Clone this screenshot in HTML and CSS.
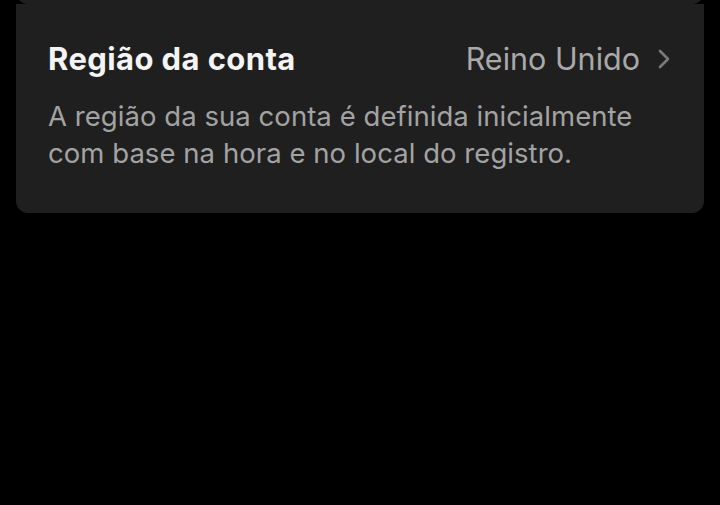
FILE: index.html
```html
<!DOCTYPE html>
<html lang="pt">
<head>
<meta charset="utf-8">
<link rel="stylesheet" href="styles.css">
</head>
<body>
<div class="page">
  <div class="prev-card"></div>
  <section class="card">
    <div class="row">
      <h2 class="title">Região da conta</h2>
      <div class="value">
        <span>Reino Unido</span>
        <svg class="chev" width="16" height="24" viewBox="0 0 16 24" aria-hidden="true"><path d="M4 4 L12 12 L4 20" fill="none" stroke="#7a7a7a" stroke-width="2.6" stroke-linecap="round" stroke-linejoin="round"/></svg>
      </div>
    </div>
    <p class="desc">A região da sua conta é definida inicialmente com base na hora e no local do registro.</p>
  </section>
</div>
</body>
</html>
```

FILE: styles.css
```css
html, body {
  margin: 0;
  padding: 0;
  background: #000;
  height: 100%;
  overflow: hidden;
}
.page {
  padding: 0 16px;
  font-family: Inter, "Liberation Sans", sans-serif;
}
.prev-card {
  height: 24px;
  margin-top: -20px;
  background: #1f1f1f;
  border-radius: 0 0 12px 12px;
}
.card {
  background: #1f1f1f;
  border-radius: 0 0 12px 12px;
  padding: 37px 32px 38px 32px;
  box-sizing: border-box;
  height: 209px;
}
.row {
  display: flex;
  align-items: center;
  justify-content: space-between;
}
.title {
  margin: 0;
  font-size: 31px;
  font-weight: 700;
  letter-spacing: 0.4px;
  color: #f4f4f4;
  line-height: 36px;
}
.value {
  display: flex;
  align-items: center;
  gap: 16px;
  color: #a9a9a9;
  font-size: 30.5px;
  line-height: 36px;
}
.chev {
  display: block;
}
.desc {
  margin: 21px 0 0 0;
  font-size: 27.5px;
  letter-spacing: 0.05px;
  line-height: 37px;
  color: #a3a3a3;
}
```
